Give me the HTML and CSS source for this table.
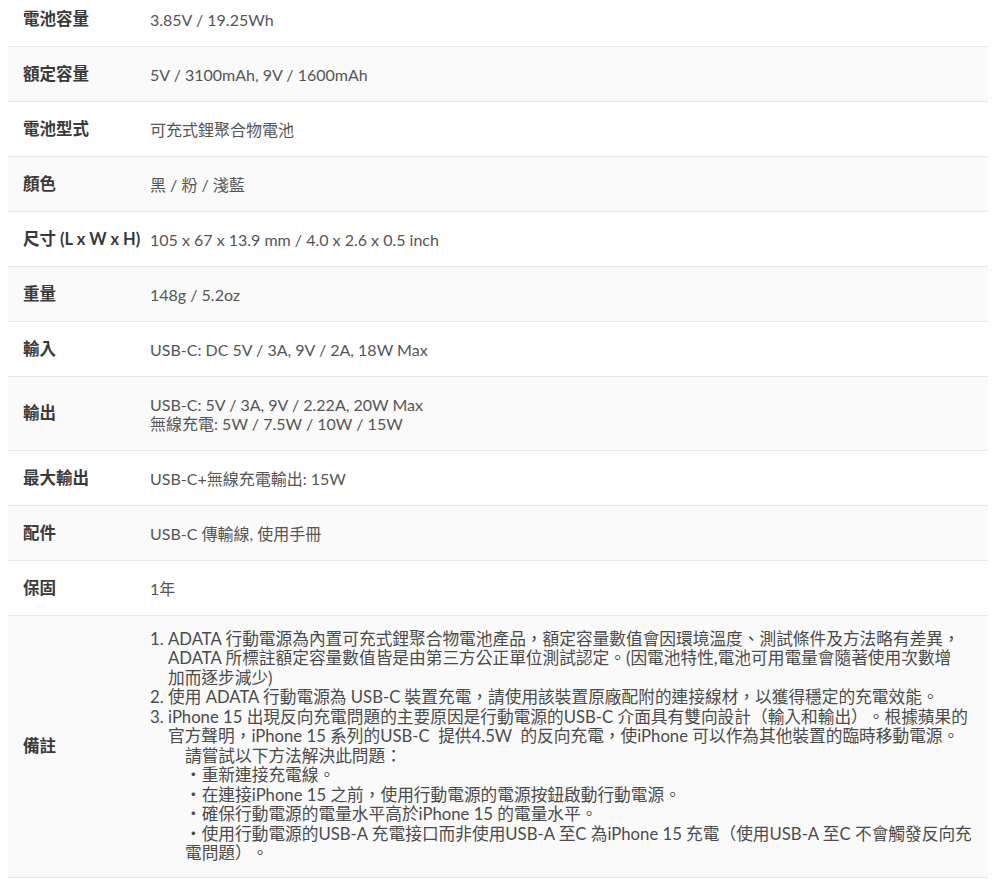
FILE: index.html
```html
<!DOCTYPE html>
<html lang="zh-Hant">
<head>
<meta charset="utf-8">
<title>規格</title>
<link rel="stylesheet" href="styles.css">
</head>
<body>
<div class="spec">
  <div class="row first"><div class="label">電池容量</div><div class="value">3.85V / 19.25Wh</div></div>
  <div class="row"><div class="label">額定容量</div><div class="value">5V / 3100mAh, 9V / 1600mAh</div></div>
  <div class="row"><div class="label">電池型式</div><div class="value">可充式鋰聚合物電池</div></div>
  <div class="row"><div class="label">顏色</div><div class="value">黑 / 粉 / 淺藍</div></div>
  <div class="row"><div class="label">尺寸 (L x W x H)</div><div class="value">105 x 67 x 13.9 mm / 4.0 x 2.6 x 0.5 inch</div></div>
  <div class="row"><div class="label">重量</div><div class="value">148g / 5.2oz</div></div>
  <div class="row"><div class="label">輸入</div><div class="value">USB-C: DC 5V / 3A, 9V / 2A, 18W Max</div></div>
  <div class="row"><div class="label">輸出</div><div class="value">USB-C: 5V / 3A, 9V / 2.22A, 20W Max<br>無線充電: 5W / 7.5W / 10W / 15W</div></div>
  <div class="row"><div class="label">最大輸出</div><div class="value">USB-C+無線充電輸出: 15W</div></div>
  <div class="row"><div class="label">配件</div><div class="value">USB-C 傳輸線, 使用手冊</div></div>
  <div class="row"><div class="label">保固</div><div class="value">1年</div></div>
  <div class="row remarks-row"><div class="label">備註</div>
    <div class="value remarks">
      <div class="item"><span class="num">1.</span><div class="text">ADATA 行動電源為內置可充式鋰聚合物電池產品，額定容量數值會因環境溫度、測試條件及方法略有差異，<br>ADATA 所標註額定容量數值皆是由第三方公正單位測試認定。(因電池特性,電池可用電量會隨著使用次數增<br>加而逐步減少)</div></div>
      <div class="item"><span class="num">2.</span><div class="text">使用 ADATA 行動電源為 USB-C 裝置充電，請使用該裝置原廠配附的連接線材，以獲得穩定的充電效能。</div></div>
      <div class="item"><span class="num">3.</span><div class="text">iPhone 15 出現反向充電問題的主要原因是行動電源的USB-C 介面具有雙向設計（輸入和輸出）。根據蘋果的<br>官方聲明，iPhone 15 系列的USB-C&nbsp; 提供4.5W&nbsp; 的反向充電，使iPhone 可以作為其他裝置的臨時移動電源。
        <div class="sub">請嘗試以下方法解決此問題：<br>・重新連接充電線。<br>・在連接iPhone 15 之前，使用行動電源的電源按鈕啟動行動電源。<br>・確保行動電源的電量水平高於iPhone 15 的電量水平。<br>・使用行動電源的USB-A 充電接口而非使用USB-A 至C 為iPhone 15 充電（使用USB-A 至C 不會觸發反向充<br>電問題）。</div>
      </div></div>
    </div>
  </div>
</div>
</body>
</html>
```

FILE: styles.css
```css
html, body {
  margin: 0;
  padding: 0;
  background: #ffffff;
}
body {
  font-family: "Lato", "Noto Sans CJK TC", sans-serif;
  font-size: 16px;
  color: #555555;
  text-spacing-trim: space-all;
}
.spec {
  width: 980px;
  margin: -8px 0 0 8px;
}
.row {
  display: grid;
  grid-template-columns: 142px 1fr;
  align-items: center;
  border-bottom: 1px solid #e8e8e8;
  background: #ffffff;
}
.row:nth-child(even) {
  background: #fafafa;
}
.label {
  padding: 17.5px 0 17.5px 15px;
  line-height: 19px;
  font-size: 16.5px;
  font-weight: 700;
  color: #3a3a3a;
  white-space: nowrap;
}
.value {
  padding: 17.5px 0;
  line-height: 19px;
  color: #555555;
}
.remarks {
  padding: 13.5px 0;
  font-size: 16.7px;
  line-height: 19.5px;
  white-space: nowrap;
  color: #4a4a4a;
}
.item {
  display: flex;
}
.num {
  width: 18px;
  flex: none;
}
.sub {
  padding-left: 17px;
}
```
